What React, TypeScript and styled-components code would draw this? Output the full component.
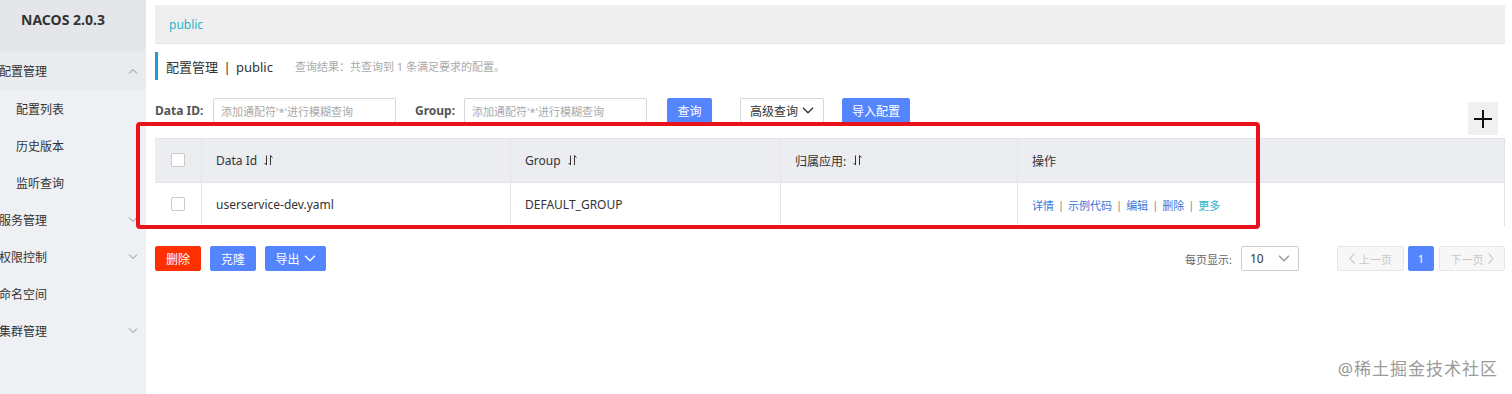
import * as React from 'react';
import styled, { createGlobalStyle } from 'styled-components';

const GlobalStyle = createGlobalStyle`
  html, body {
    margin: 0;
    padding: 0;
    background: #fff;
    font-family: "Noto Sans", "Noto Sans CJK SC", sans-serif;
    color: #333;
  }
`;

const Page = styled.div`
  display: flex;
  width: 1512px;
  height: 394px;
  position: relative;
  overflow: hidden;
`;

const Sidebar = styled.div`
  width: 146px;
  flex-shrink: 0;
  background: #eef0f3;
  display: flex;
  flex-direction: column;
`;

const Brand = styled.div`
  height: 52px;
  background: #e4e6e9;
  display: flex;
  align-items: center;
  justify-content: center;
  font-weight: 700;
  font-size: 14px;
  color: #333;
  padding-right: 20px;
  padding-bottom: 14px;
  box-sizing: border-box;
`;

const MenuItem = styled.div<{ $sub?: boolean; $open?: boolean }>`
  height: ${p => (p.$open ? 38 : 37)}px;
  display: flex;
  align-items: center;
  justify-content: space-between;
  padding-left: ${p => (p.$sub ? 16 : 0)}px;
  margin-left: ${p => (p.$sub ? 0 : -1)}px;
  padding-right: 8px;
  font-size: 12px;
  color: #333;
  background: ${p => (p.$open ? '#e9ebee' : 'transparent')};
`;

const Chevron = ({ up }: { up?: boolean }) => (
  <svg width="10" height="6" viewBox="0 0 10 6">
    <path
      d={up ? 'M1 5.5 L5 1.5 L9 5.5' : 'M1 0.5 L5 4.5 L9 0.5'}
      fill="none"
      stroke="#888"
      strokeWidth="1"
    />
  </svg>
);

const Main = styled.div`
  flex: 1;
  padding: 5px 7px 0 9px;
  display: flex;
  flex-direction: column;
`;

const Breadcrumb = styled.div`
  height: 38px;
  background: #efefef;
  border-bottom: 1px solid #e2e2e2;
  display: flex;
  align-items: center;
  padding-left: 14px;
  font-size: 12px;
  color: #2bb3c9;
`;

const TitleRow = styled.div`
  margin-top: 8px;
  height: 28px;
  border-left: 3px solid #1e9bd6;
  display: flex;
  align-items: center;
  padding-left: 8px;
`;

const Title = styled.span`
  font-size: 13px;
  color: #333;
  word-spacing: 2px;
`;

const Summary = styled.span`
  margin-left: 22px;
  font-size: 11px;
  color: #aaa;
`;

const Toolbar = styled.div`
  margin-top: 18px;
  height: 40px;
  display: flex;
  align-items: flex-start;
`;

const Label = styled.span<{ $w: number }>`
  width: ${p => p.$w}px;
  font-size: 12px;
  font-weight: 700;
  color: #555;
  height: 25px;
  line-height: 25px;
  white-space: nowrap;
`;

const Input = styled.div`
  width: 183px;
  height: 25px;
  box-sizing: border-box;
  border: 1px solid #d6d6d6;
  border-radius: 2px;
  font-size: 11px;
  color: #aaa;
  padding-left: 7px;
  display: flex;
  align-items: center;
  margin-right: 19px;
`;

const Button = styled.div<{ $kind: 'primary' | 'normal' | 'danger'; $w: number; $ml?: number }>`
  width: ${p => p.$w}px;
  height: 25px;
  box-sizing: border-box;
  margin-left: ${p => p.$ml ?? 0}px;
  border-radius: 2px;
  font-size: 12px;
  display: flex;
  align-items: center;
  justify-content: center;
  gap: 4px;
  color: ${p => (p.$kind === 'normal' ? '#333' : '#fff')};
  background: ${p =>
    p.$kind === 'primary' ? '#5584ff' : p.$kind === 'danger' ? '#ff3000' : '#fff'};
  border: 1px solid
    ${p => (p.$kind === 'primary' ? '#5584ff' : p.$kind === 'danger' ? '#ff3000' : '#d6d6d6')};
`;

const PlusButton = styled.div`
  margin-left: auto;
  margin-top: 4px;
  margin-right: 7px;
  width: 30px;
  height: 33px;
  background: #f0f0f0;
  display: flex;
  align-items: center;
  justify-content: center;
`;

const Table = styled.div`
  display: grid;
  grid-template-columns: 46px 309px 270px 237px 1fr;
  border-top: 1px solid #e4e4e4;
  border-right: 1px solid #e4e4e4;
`;

const Cell = styled.div<{ $head?: boolean; $center?: boolean }>`
  height: 43px;
  background: ${p => (p.$head ? '#ebedf0' : '#fff')};
  border-left: ${p => (p.$center ? 'none' : '1px solid #e4e4e4')};
  border-bottom: ${p => (p.$head ? '1px solid #e4e4e4' : 'none')};
  display: flex;
  align-items: center;
  justify-content: ${p => (p.$center ? 'center' : 'flex-start')};
  padding-left: ${p => (p.$center ? 0 : 14)}px;
  font-size: 12px;
  color: #333;
  gap: 7px;
`;

const Checkbox = styled.div`
  width: 14px;
  height: 14px;
  box-sizing: border-box;
  border: 1px solid #c9c9c9;
  border-radius: 2px;
  background: #fff;
  margin-bottom: 2px;
`;

const Actions = styled.div`
  display: flex;
  align-items: center;
  gap: 4px;
  font-size: 11px;
  color: #3a78d9;
`;

const Sep = styled.span`
  color: #888;
`;

const More = styled.span`
  color: #2bb3c9;
`;

const SortIcon = () => (
  <svg width="9" height="11" viewBox="0 0 9 11">
    <path d="M2.5 0.5 V10 M0.5 8 L2.5 10 M6.5 0.5 V10 M6.5 0.5 L8.5 2.5" fill="none" stroke="#333" strokeWidth="1" />
  </svg>
);

const Footer = styled.div`
  margin-top: 20px;
  display: flex;
  align-items: center;
`;

const PageLabel = styled.span`
  margin-left: auto;
  font-size: 11px;
  color: #666;
  margin-right: 9px;
`;

const Select = styled.div`
  width: 58px;
  height: 25px;
  box-sizing: border-box;
  border: 1px solid #ccc;
  border-radius: 2px;
  display: flex;
  align-items: center;
  justify-content: space-between;
  padding: 0 8px;
  font-size: 12px;
  color: #333;
  margin-right: 38px;
`;

const PageBtn = styled.div<{ $active?: boolean; $w: number; $ml?: number }>`
  width: ${p => p.$w}px;
  height: 25px;
  box-sizing: border-box;
  margin-left: ${p => p.$ml ?? 0}px;
  border-radius: 2px;
  display: flex;
  align-items: center;
  justify-content: center;
  gap: 4px;
  font-size: 11px;
  color: ${p => (p.$active ? '#fff' : '#c8c8c8')};
  background: ${p => (p.$active ? '#5584ff' : '#f7f7f7')};
  border: 1px solid ${p => (p.$active ? '#5584ff' : '#e6e6e6')};
`;

const Annotation = styled.div`
  position: absolute;
  left: 136px;
  top: 122px;
  width: 1124px;
  height: 107px;
  box-sizing: border-box;
  border: 4px solid #e8121d;
  border-radius: 4px;
  pointer-events: none;
`;

const Watermark = styled.div`
  position: absolute;
  right: 14px;
  bottom: 14px;
  font-size: 17px;
  color: #9a9a9a;
  letter-spacing: 1px;
`;

const Arrow = ({ dir, color }: { dir: 'left' | 'right' | 'down'; color: string }) => (
  <svg width={dir === 'down' ? 12 : 6} height={dir === 'down' ? 7 : 11} viewBox={dir === 'down' ? '0 0 12 7' : '0 0 6 11'}>
    <path
      d={dir === 'down' ? 'M1 0.8 L6 5.8 L11 0.8' : dir === 'left' ? 'M5.5 0.5 L0.8 5.5 L5.5 10.5' : 'M0.5 0.5 L5.2 5.5 L0.5 10.5'}
      fill="none"
      stroke={color}
      strokeWidth="1.3"
    />
  </svg>
);

export default function App() {
  return (
    <Page>
      <GlobalStyle />
      <Sidebar>
        <Brand>NACOS 2.0.3</Brand>
        <MenuItem $open>
          配置管理
          <Chevron up />
        </MenuItem>
        <MenuItem $sub>配置列表</MenuItem>
        <MenuItem $sub>历史版本</MenuItem>
        <MenuItem $sub>监听查询</MenuItem>
        <MenuItem>
          服务管理
          <Chevron />
        </MenuItem>
        <MenuItem>
          权限控制
          <Chevron />
        </MenuItem>
        <MenuItem>命名空间</MenuItem>
        <MenuItem>
          集群管理
          <Chevron />
        </MenuItem>
      </Sidebar>
      <Main>
        <Breadcrumb>public</Breadcrumb>
        <TitleRow>
          <Title>配置管理 | public</Title>
          <Summary>查询结果：共查询到 1 条满足要求的配置。</Summary>
        </TitleRow>
        <Toolbar>
          <Label $w={58}>Data ID:</Label>
          <Input>添加通配符'*'进行模糊查询</Input>
          <Label $w={49}>Group:</Label>
          <Input>添加通配符'*'进行模糊查询</Input>
          <Button $kind="primary" $w={45} $ml={1}>查询</Button>
          <Button $kind="normal" $w={84} $ml={28}>
            高级查询 <Arrow dir="down" color="#333" />
          </Button>
          <Button $kind="primary" $w={68} $ml={18}>导入配置</Button>
          <PlusButton>
            <svg width="20" height="20" viewBox="0 0 20 20">
              <path d="M10 1 V19 M1 10 H19" stroke="#111" strokeWidth="2" />
            </svg>
          </PlusButton>
        </Toolbar>
        <Table>
          <Cell $head $center><Checkbox /></Cell>
          <Cell $head>Data Id <SortIcon /></Cell>
          <Cell $head>Group <SortIcon /></Cell>
          <Cell $head>归属应用: <SortIcon /></Cell>
          <Cell $head>操作</Cell>
          <Cell $center><Checkbox /></Cell>
          <Cell>userservice-dev.yaml</Cell>
          <Cell>DEFAULT_GROUP</Cell>
          <Cell />
          <Cell>
            <Actions>
              详情 <Sep>|</Sep> 示例代码 <Sep>|</Sep> 编辑 <Sep>|</Sep> 删除 <Sep>|</Sep> <More>更多</More>
            </Actions>
          </Cell>
        </Table>
        <Footer>
          <Button $kind="danger" $w={46}>删除</Button>
          <Button $kind="primary" $w={46} $ml={9}>克隆</Button>
          <Button $kind="primary" $w={61} $ml={9}>
            导出 <Arrow dir="down" color="#fff" />
          </Button>
          <PageLabel>每页显示:</PageLabel>
          <Select>
            10 <Arrow dir="down" color="#999" />
          </Select>
          <PageBtn $w={67}>
            <Arrow dir="left" color="#ccc" /> 上一页
          </PageBtn>
          <PageBtn $active $w={26} $ml={4}>1</PageBtn>
          <PageBtn $w={66} $ml={5}>
            下一页 <Arrow dir="right" color="#ccc" />
          </PageBtn>
        </Footer>
      </Main>
      <Annotation />
      <Watermark>@稀土掘金技术社区</Watermark>
    </Page>
  );
}
